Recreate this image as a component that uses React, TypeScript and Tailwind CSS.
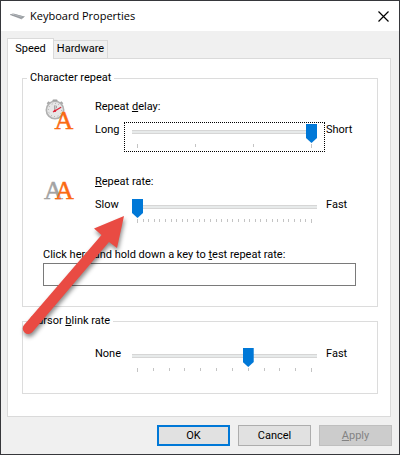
import { useState } from "react";
import type { ReactNode } from "react";
import clsx from "clsx";

interface TrackbarProps {
  id: string;
  low: string;
  high: string;
  max: number;
  initial: number;
  focused?: boolean;
}

function Trackbar({ id, low, high, max, initial, focused }: TrackbarProps) {
  const [value, setValue] = useState(initial);

  return (
    <div className="flex items-start">
      <span className="w-[29px] leading-4">{low}</span>
      <div
        className={clsx(
          "min-w-0 flex-1 h-[30px] border border-dotted px-[7px] pt-px",
          focused ? "border-black" : "border-transparent",
        )}
      >
        <input
          id={id}
          type="range"
          min={0}
          max={max}
          value={value}
          onChange={(e) => setValue(Number(e.target.value))}
          className="block w-full h-[19px] appearance-none bg-transparent outline-none [&::-webkit-slider-runnable-track]:h-[19px] [&::-webkit-slider-runnable-track]:bg-[linear-gradient(#d6d6d6_1px,#e7eaea_1px,#e7eaea_3px,#d6d6d6_3px)] [&::-webkit-slider-runnable-track]:bg-[length:100%_4px] [&::-webkit-slider-runnable-track]:bg-[position:0_6px] [&::-webkit-slider-runnable-track]:bg-no-repeat [&::-webkit-slider-thumb]:appearance-none [&::-webkit-slider-thumb]:w-[11px] [&::-webkit-slider-thumb]:h-[19px] [&::-webkit-slider-thumb]:bg-[#0078d7] [&::-webkit-slider-thumb]:[clip-path:polygon(0_0,100%_0,100%_14px,50%_100%,0_14px)]"
        />
        <div className="mt-px flex justify-between px-[5px]" aria-hidden="true">
          {Array.from({ length: max + 1 }, (_, i) => (
            <span
              key={i}
              className={clsx("w-px bg-[#c4c4c4]", i === 0 || i === max ? "h-1" : "h-[3px]")}
            />
          ))}
        </div>
      </div>
      <span className="w-[52px] pl-px leading-4">{high}</span>
    </div>
  );
}

function Group({ title, className, children }: { title: ReactNode; className?: string; children: ReactNode }) {
  return (
    <fieldset className={clsx("min-w-0 border border-[#dcdcdc]", className)}>
      <legend className="ml-1 px-[3px] leading-4">{title}</legend>
      {children}
    </fieldset>
  );
}

function KeyboardIcon() {
  return (
    <svg width="16" height="8" viewBox="0 0 16 8" aria-hidden="true">
      <path d="M1 2.500 L4 1.500 L15.500 4.500 L12.500 6.800 Z" fill="#9a9ea2" />
      <path d="M2 2.500 L4 1.800 L13.500 4.400 L11.800 5.600 Z" fill="#c9cccf" />
      <path d="M3 2.700 L12 5.200 M5 2.200 L13 4.500" stroke="#8a8f94" strokeWidth="0.500" />
      <path d="M1 2.500 L12.500 6.800 L15.500 4.500" fill="none" stroke="#7d8288" strokeWidth="0.600" />
    </svg>
  );
}

function DelayIcon() {
  return (
    <svg className="overflow-visible" width="32" height="32" viewBox="0 0 32 32" aria-hidden="true">
      <path d="M4.500 6 L6.500 4 M17.500 4 L19.500 6" stroke="#a5a5a5" strokeWidth="2.400" />
      <rect x="9.500" y="1.500" width="5" height="3" rx="1" fill="#999" />
      <circle cx="12" cy="12" r="8.700" fill="#e6e6e6" stroke="#b0b0b0" strokeWidth="1.600" />
      <circle cx="12" cy="12" r="6.600" fill="none" stroke="#8b8b8b" strokeWidth="0.900" strokeDasharray="0.700 2.750" />
      <path d="M11.500 7.500 V11.500 M11.500 8 H13.500 V10 H11.500" fill="none" stroke="#999" strokeWidth="0.800" />
      <path d="M10 14 L18 9.200" stroke="#dc2135" strokeWidth="1.300" />
      <circle cx="12" cy="12.800" r="1.200" fill="#dc2135" />
      <text x="11.500" y="31" fontSize="26" fill="#fb6a13" stroke="#fb6a13" strokeWidth="0.500" fontFamily="Liberation Serif, serif">
        A
      </text>
    </svg>
  );
}

function RateIcon() {
  return (
    <svg className="overflow-visible" width="32" height="32" viewBox="0 0 32 32" aria-hidden="true">
      <text x="1" y="26" fontSize="26" fontFamily="Liberation Serif, serif" strokeWidth="0.500">
        <tspan fill="#a3a3a3" stroke="#a3a3a3">A</tspan>
        <tspan x="12" fill="#fb6a13" stroke="#fb6a13">A</tspan>
      </text>
    </svg>
  );
}

function PointerArrow() {
  return (
    <svg
      className="pointer-events-none absolute left-[13px] top-[207px] drop-shadow-[1px_3px_2px_rgba(0,0,0,0.45)]"
      width="120"
      height="136"
      viewBox="14 208 120 136"
      aria-hidden="true"
    >
      <path
        d="M124 216 L94 228.500 L101.500 235 L24 325 A5.500 5.500 0 0 0 32.500 332 L109 242 L117 248 Z"
        fill="#e94b43"
      />
    </svg>
  );
}

const BUTTON = "w-[73px] h-[21px] leading-none";

export default function App() {
  const [tab, setTab] = useState("Speed");

  return (
    <main className="relative border border-[#36373b] bg-[#f0f0f0] font-[Roboto,sans-serif] text-[11px] text-black">
      <header className="flex h-[30px] items-center bg-white pl-2 pr-[10px]">
        <KeyboardIcon />
        <h1 className="ml-[5px] flex-1 font-['Open_Sans',sans-serif]">Keyboard Properties</h1>
        <button type="button" aria-label="Close">
          <svg width="11" height="11" viewBox="0 0 11 11" aria-hidden="true">
            <path d="M0.500 0.500 L10.500 10.500 M10.500 0.500 L0.500 10.500" stroke="#000" strokeWidth="1.200" />
          </svg>
        </button>
      </header>

      <div className="pl-[6px] pr-2 pt-[7px]">
        <div role="tablist" className="flex items-end">
          {["Speed", "Hardware"].map((name) => (
            <button
              key={name}
              type="button"
              role="tab"
              aria-selected={tab === name}
              onClick={() => setTab(name)}
              className={clsx(
                "border border-[#dadada] border-b-0",
                tab === name
                  ? "relative -mb-px h-[21px] w-[47px] bg-white"
                  : "h-[18px] w-[54px] border-l-0 bg-[#f0f0f0]",
              )}
            >
              {name}
            </button>
          ))}
        </div>

        <div className="border border-[#dadada] bg-white pb-[22px] pl-[14px] pr-3 pt-[11px]">
          <Group title="Character repeat" className="pb-5">
            <div className="flex pt-3">
              <div className="w-[72px] pl-5">
                <DelayIcon />
              </div>
              <div className="min-w-0 flex-1">
                <label htmlFor="delay" className="mb-[6px] block leading-[18px]">
                  Repeat <u>d</u>elay:
                </label>
                <Trackbar id="delay" low="Long" high="Short" max={3} initial={3} focused />
              </div>
            </div>
            <div className="flex pt-[21px]">
              <div className="w-[72px] pl-5">
                <RateIcon />
              </div>
              <div className="min-w-0 flex-1">
                <label htmlFor="rate" className="mb-[6px] block leading-[18px]">
                  <u>R</u>epeat rate:
                </label>
                <Trackbar id="rate" low="Slow" high="Fast" max={31} initial={0} />
              </div>
            </div>
            <div className="pl-5 pr-[21px] pt-5">
              <label htmlFor="test" className="block leading-4">
                Click here and hold down a key to <u>t</u>est repeat rate:
              </label>
              <input id="test" type="text" className="block h-[23px] w-full border border-[#7a7a7a] bg-white px-1 outline-none" />
            </div>
          </Group>

          <Group
            className="mt-[6px] pb-[17px]"
            title={
              <label htmlFor="blink">
                Cursor <u>b</u>link rate
              </label>
            }
          >
            <div className="pl-[72px] pt-[17px]">
              <Trackbar id="blink" low="None" high="Fast" max={11} initial={7} />
            </div>
          </Group>
        </div>
      </div>

      <footer className="flex justify-end gap-2 px-[7px] py-2">
        <button type="button" className={clsx(BUTTON, "border-2 border-[#0078d7] bg-[#e1e1e1]")}>
          OK
        </button>
        <button type="button" className={clsx(BUTTON, "border border-[#adadad] bg-[#e1e1e1]")}>
          Cancel
        </button>
        <button type="button" disabled className={clsx(BUTTON, "border border-[#bfbfbf] bg-[#cccccc] text-[#838383]")}>
          <u>A</u>pply
        </button>
      </footer>

      <PointerArrow />
    </main>
  );
}
